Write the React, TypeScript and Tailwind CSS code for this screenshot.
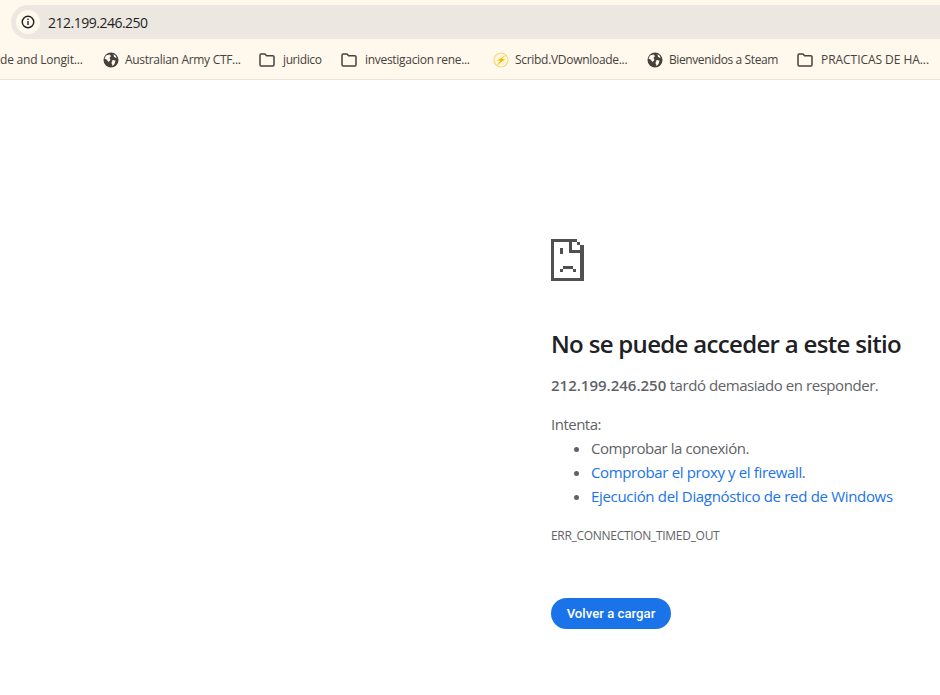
import React from "react";

const uiFont = "font-['Open_Sans','Noto_Sans',sans-serif]";

const GlobeIcon = () => (
  <svg width="16" height="16" viewBox="0 0 16 16" className="shrink-0">
    <circle cx="8" cy="8" r="7.5" fill="#45423d" />
    <path d="M3 3.5 L6.5 2.5 L8 4 L6.5 6 L7.5 8 L5.5 10 L3.5 7.5 L1.5 6.5 Z" fill="#fff8ec" />
    <path d="M9.5 8 L12.5 8.5 L11.5 12 L9.5 14 L8.5 11 Z" fill="#fff8ec" />
    <path d="M10.5 2 L13 4 L13.5 6 L11 5 Z" fill="#fff8ec" />
  </svg>
);

const FolderIcon = () => (
  <svg width="16" height="14" viewBox="0 0 16 14" fill="none" className="shrink-0">
    <path d="M1 2.2 C1 1.5 1.5 1 2.2 1 H6 L7.6 2.8 H13.8 C14.5 2.8 15 3.3 15 4 V11.8 C15 12.5 14.5 13 13.8 13 H2.2 C1.5 13 1 12.5 1 11.8 Z" stroke="#45423d" strokeWidth="1.5" strokeLinejoin="round" />
  </svg>
);

const BoltIcon = () => (
  <svg width="16" height="16" viewBox="0 0 16 16" className="shrink-0">
    <circle cx="8" cy="8" r="7" fill="#fff8dc" stroke="#f8d77a" strokeWidth="1.2" />
    <path d="M13.4 2.4 L4 8.8 H7.4 L3.2 14 L12.4 7 H8.8 Z" fill="#f6bb12" />
  </svg>
);

// chrome's pixel art sad file
const SadFile = () => (
  <svg width="33" height="42" viewBox="0 0 33 42" shapeRendering="crispEdges" fill="#505050" className="block">
    <rect x="0" y="0" width="3" height="42" />
    <rect x="0" y="0" width="26" height="3" />
    <rect x="0" y="39" width="33" height="3" />
    <rect x="26" y="3" width="3" height="3" />
    <rect x="29" y="6" width="4" height="36" />
    <rect x="18" y="3" width="3" height="11" />
    <rect x="18" y="11" width="11" height="3" />
    <rect x="9" y="9" width="3" height="6" />
    <rect x="12" y="27" width="10" height="3" />
    <rect x="9" y="30" width="3" height="3" />
    <rect x="22" y="30" width="3" height="3" />
  </svg>
);

const Bookmark = ({ icon, label, width, gap, tracking }: { icon: React.ReactNode; label: string; width: string; gap: string; tracking: string }) => (
  <div className={`flex items-center shrink-0 ${gap} ${width}`}>
    {icon}
    <span className={`text-[12px] text-[#45423d] whitespace-nowrap ${tracking}`}>{label}</span>
  </div>
);

export default function App() {
  return (
    <div className={`h-[695px] w-[940px] overflow-hidden bg-white flex flex-col ${uiFont}`}>
      {/* Browser toolbar */}
      <div className="h-[80px] shrink-0 bg-[#fff8ec] border-b border-[#ece5da] pt-[5px] pl-[11px]">
        <div className="h-[34px] w-[960px] rounded-l-full bg-[#ece8e1] flex items-center pl-[5px]">
          <div className="w-[24px] h-[24px] rounded-full bg-[#fff8ec] flex items-center justify-center">
            <svg width="14" height="14" viewBox="0 0 14 14" fill="none">
              <circle cx="7" cy="7" r="5.75" stroke="#1f1f1f" strokeWidth="1.4" />
              <rect x="6.3" y="6" width="1.4" height="4" fill="#1f1f1f" />
              <rect x="6.3" y="3.6" width="1.4" height="1.4" fill="#1f1f1f" />
            </svg>
          </div>
          <span className="ml-[8px] text-[14px] tracking-[-0.5px] text-[#1f1f1f]">212.199.246.250</span>
        </div>
        <div className="flex items-center h-[40px] pt-[1px] ml-[-11px] overflow-hidden">
          <span className="text-[12px] tracking-[-0.2px] text-[#45423d] whitespace-nowrap w-[103px] shrink-0">de and Longit...</span>
          <Bookmark icon={<GlobeIcon />} gap="gap-[6px]" tracking="tracking-[-0.3px]" label="Australian Army CTF..." width="w-[156px]" />
          <Bookmark icon={<FolderIcon />} gap="gap-[8px]" tracking="tracking-[-0.4px]" label="juridico" width="w-[82px]" />
          <Bookmark icon={<FolderIcon />} gap="gap-[8px]" tracking="tracking-[-0.3px]" label="investigacion rene..." width="w-[152px]" />
          <Bookmark icon={<BoltIcon />} gap="gap-[6px]" tracking="tracking-[-0.3px]" label="Scribd.VDownloade..." width="w-[154px]" />
          <Bookmark icon={<GlobeIcon />} gap="gap-[6px]" tracking="tracking-[-0.4px]" label="Bienvenidos a Steam" width="w-[150px]" />
          <Bookmark icon={<FolderIcon />} gap="gap-[8px]" tracking="tracking-[-0.05px]" label="PRACTICAS DE HA..." width="w-[140px]" />
        </div>
      </div>

      {/* Error page */}
      <div className="pl-[551px] pt-[159px] text-[#5f6368]">
        <SadFile />
        <h1 className="mt-[47px] text-[24px] leading-[32px] font-semibold tracking-[-0.68px] text-[#202124] whitespace-nowrap">
          No se puede acceder a este sitio
        </h1>
        <p className="mt-[13px] text-[15px] leading-[24px] tracking-[-0.44px] whitespace-nowrap">
          <strong className="font-semibold tracking-normal">212.199.246.250</strong> tardó demasiado en responder.
        </p>
        <p className="mt-[15px] text-[15px] leading-[24px] tracking-[-0.5px]">Intenta:</p>
        <ul className="list-disc pl-[40px] text-[15px] leading-[24px] whitespace-nowrap">
          <li className="tracking-[-0.45px]">Comprobar la conexión.</li>
          <li className="tracking-[-0.36px]">
            <span className="text-[#1a73e8]">Comprobar el proxy y el firewall</span>.
          </li>
          <li className="tracking-[-0.32px]">
            <span className="text-[#1a73e8]">Ejecución del Diagnóstico de red de Windows</span>
          </li>
        </ul>
        <div className="mt-[20px] text-[12px] leading-[16px] tracking-[-0.3px]">ERR_CONNECTION_TIMED_OUT</div>
        <button className="mt-[54px] h-[31px] w-[120px] rounded-full bg-[#1a73e8] text-white text-[13.2px] font-medium font-['Roboto',sans-serif] flex items-center justify-center">
          Volver a cargar
        </button>
      </div>
    </div>
  );
}
